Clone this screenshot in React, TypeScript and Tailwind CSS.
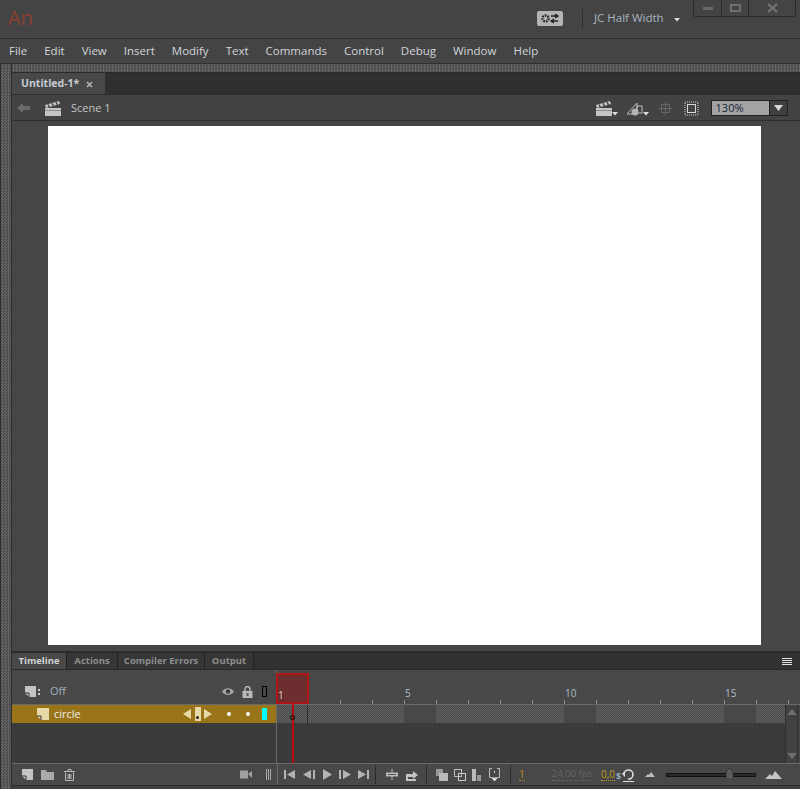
import type { ReactNode } from 'react'

const menus = ['File', 'Edit', 'View', 'Insert', 'Modify', 'Text', 'Commands', 'Control', 'Debug', 'Window', 'Help']
const frames = Array.from({ length: 17 }, (_, i) => i)
const rulerLabels: Record<number, string> = { 4: '5', 9: '10', 14: '15' }

const dots = 'bg-[image:repeating-conic-gradient(#474747_0_25%,#3e3e3e_0_50%)] bg-[size:2px_2px]'
const dotsDark = 'bg-[image:repeating-conic-gradient(#3f3f3f_0_25%,#363636_0_50%)] bg-[size:2px_2px]'
const dotsTab = 'bg-[image:repeating-conic-gradient(#363636_0_25%,#2c2c2c_0_50%)] bg-[size:2px_2px]'
const grip = 'bg-[image:repeating-conic-gradient(#636363_0_25%,#4a4a4a_0_50%)] bg-[size:3px_3px]'
const noise = 'bg-[image:repeating-conic-gradient(#626262_0_25%,#494949_0_50%)] bg-[size:2px_2px]'

function Icon({ w, h, className, children }: { w: number; h: number; className?: string; children: ReactNode }) {
  return (
    <svg width={w} height={h} viewBox={`0 0 ${w} ${h}`} className={`shrink-0 ${className ?? ''}`}>
      {children}
    </svg>
  )
}

function Clapper({ className }: { className?: string }) {
  return (
    <Icon w={16} h={15} className={className}>
      <path d="M0 7h16v8H0z" fill="#c4c4c4" />
      <path d="M0 9h16v1H0z" fill="#8a8a8a" />
      <path d="M0 4l14-4 1 3L1 7z" fill="#c4c4c4" />
      <path d="M3 3.5l1.5 3M7 2.3l1.5 3M11 1l1.5 3" stroke="#444" strokeWidth="1.4" />
    </Icon>
  )
}

function Caret() {
  return (
    <Icon w={6} h={4} className="self-end">
      <path d="M0 0h6L3 3.5z" fill="#ddd" />
    </Icon>
  )
}

function LayerIcon({ size = 12, fill = '#c4c4c4' }: { size?: number; fill?: string }) {
  return (
    <Icon w={size} h={size}>
      <path d={`M0 0h${size}v${size}H4L0 ${size - 4}z`} fill={fill} />
      <path d={`M0 ${size - 4}h4v4`} fill="none" stroke="#333" />
    </Icon>
  )
}

function Tab({ label, active, width }: { label: string; active?: boolean; width: string }) {
  return (
    <div
      className={`${width} flex h-full items-center justify-center border-r border-[#222] text-[9.5px] font-bold ${
        active ? 'bg-[#484848] text-[#d4d4d4]' : 'bg-[#363636] text-[#8d8d8d]'
      }`}
    >
      {label}
    </div>
  )
}

export default function App() {
  return (
    <div className="flex h-[789px] w-[800px] flex-col overflow-hidden bg-[#444444] font-['Open_Sans',sans-serif] text-[#d2d2d2]">
      {/* title bar */}
      <div className="relative flex h-[39px] shrink-0 items-start border-b border-[#303030] pl-[8px]">
        <span className="mt-[3px] w-[30px] text-[20px] leading-[30px] text-[#8d3f30]">An</span>
        <div className="ml-[499px] mt-[11px] flex h-[15px] w-[26px] items-center justify-center rounded-[2px] bg-[#b4b4b4]">
          <Icon w={20} h={11}>
            <circle cx="5.5" cy="5.5" r="3" fill="none" stroke="#222" strokeWidth="2.4" strokeDasharray="1.6 1" />
            <path d="M11 3h6M15 1l3 2-3 2M18 8h-6M14 6l-3 2 3 2" fill="none" stroke="#222" strokeWidth="1.3" />
          </Icon>
        </div>
        <div className="ml-[19px] mt-[9px] h-[20px] w-px bg-[#2f2f2f]" />
        <span className="ml-[11px] mt-[9px] text-[11.5px] leading-[18px] text-[#a9b6c2]">JC Half Width</span>
        <div className="ml-[10px] mt-[18px]">
          <Caret />
        </div>
        <div className="absolute left-[693px] top-0 flex h-[17px] w-[103px] rounded-b-[3px] border border-t-0 border-[#2b2b2b]">
          <div className="flex w-[28px] items-center justify-center border-r border-[#2b2b2b] bg-[#444444]">
            <div className="h-[3px] w-[10px] bg-[#6a6a6a]" />
          </div>
          <div className="flex w-[27px] items-center justify-center border-r border-[#2b2b2b]">
            <div className="h-[8px] w-[11px] border-2 border-[#6e6e6e]" />
          </div>
          <div className="flex flex-1 items-center justify-center">
            <Icon w={11} h={10}>
              <path d="M1 1l9 8M10 1L1 9" stroke="#757575" strokeWidth="2" />
            </Icon>
          </div>
        </div>
      </div>

      {/* menu bar */}
      <div className="flex h-[25px] shrink-0 items-center gap-[17px] border-b border-[#2f2f2f] pl-[9px] text-[11.5px] text-[#d2d6da]">
        {menus.map((m) => (
          <span key={m}>{m}</span>
        ))}
      </div>

      <div className="flex min-h-0 flex-1">
        {/* left gripper rail */}
        <div className={`w-[12px] shrink-0 border-x border-x-[#2f2f2f] ${grip}`} />

        <div className="flex min-w-0 flex-1 flex-col">
          <div className={`h-[9px] shrink-0 border-b border-[#2a2a2a] ${grip}`} />

          {/* document tab */}
          <div className="flex h-[21px] shrink-0 bg-[#2f2f2f]">
            <div className="flex w-[93px] items-center bg-[#484848] pl-[9px] pt-[1px] text-[10.5px] font-bold text-[#c6ccd2]">
              Untitled-1*
              <Icon w={7} h={7} className="ml-[7px]">
                <path d="M1 1l5 5M6 1L1 6" stroke="#b5b5b5" strokeWidth="1.6" />
              </Icon>
            </div>
          </div>

          {/* edit bar */}
          <div className={`flex h-[27px] shrink-0 items-center border-y border-y-[#2c2c2c] pt-[1px] ${dots}`}>
            <Icon w={13} h={10} className="ml-[5px]">
              <path d="M0 5l6-5v3h7v4H6v3z" fill="#6a6a6a" />
            </Icon>
            <Clapper className="ml-[15px]" />
            <span className="ml-[10px] text-[11px] text-[#c4c4c4]">Scene 1</span>
            <div className="ml-[485px] flex items-end">
              <Clapper />
              <Caret />
            </div>
            <div className="ml-[8px] flex items-end">
              <Icon w={17} h={15}>
                <path d="M1 13L11 2v11H1z" fill="none" stroke="#bbb" />
                <rect x="11" y="5" width="5" height="7" fill="none" stroke="#bbb" />
                <circle cx="9" cy="11" r="3.5" fill="#b4b4b4" />
              </Icon>
              <Caret />
            </div>
            <Icon w={13} h={13} className="ml-[10px]">
              <rect x="2.5" y="2.5" width="8" height="8" fill="none" stroke="#666" />
              <path d="M6.5 0v13M0 6.5h13" stroke="#666" />
            </Icon>
            <Icon w={15} h={15} className="ml-[12px]">
              <rect x="1" y="1" width="13" height="13" fill="none" stroke="#888" strokeDasharray="1 1" strokeWidth="2" />
              <rect x="3.5" y="3.5" width="8" height="8" fill="none" stroke="#d8d8d8" />
            </Icon>
            <div className="ml-[12px] flex h-[16px] w-[59px] items-center border border-[#222] bg-[#a4a4a4] pl-[4px] text-[11px] text-[#16233c]">
              130%
            </div>
            <div className="flex h-[16px] w-[18px] items-center justify-center border border-l-0 border-[#222] bg-[#3f3f3f]">
              <Icon w={9} h={6}>
                <path d="M0 0h9L4.5 6z" fill="#d8d8d8" />
              </Icon>
            </div>
          </div>

          {/* stage */}
          <div className="flex min-h-0 flex-1 flex-col bg-[#464646] pb-[6px] pl-[36px] pt-[5px]">
            <div className="w-[713px] flex-1 bg-white" />
          </div>

          {/* timeline panel */}
          <div className="flex h-[135px] shrink-0 flex-col border-t-2 border-[#2a2a2a]">
            <div className={`flex h-[17px] shrink-0 items-stretch border-b border-[#2a2a2a] ${dotsTab}`}>
              <Tab label="Timeline" active width="w-[55px]" />
              <Tab label="Actions" width="w-[51px]" />
              <Tab label="Compiler Errors" width="w-[87px]" />
              <Tab label="Output" width="w-[49px]" />
              <div className="ml-auto mr-[8px] flex flex-col justify-center gap-[1px]">
                <div className="h-px w-[10px] bg-[#e0e0e0]" />
                <div className="h-px w-[10px] bg-[#e0e0e0]" />
                <div className="h-px w-[10px] bg-[#e0e0e0]" />
                <div className="h-px w-[10px] bg-[#e0e0e0]" />
              </div>
            </div>

            <div className="relative flex min-h-0 flex-1 flex-col">
              {/* header row with ruler */}
              <div className="flex h-[35px] shrink-0 border-b border-[#6a6a6a] bg-[#484848]">
                <div className="flex w-[264px] shrink-0 items-center pt-[9px]">
                  <div className="ml-[13px] flex items-center gap-[2px]">
                    <LayerIcon size={11} />
                    <div className="flex flex-col gap-[2px]">
                      <div className="h-[2px] w-[2px] bg-[#ccc]" />
                      <div className="h-[2px] w-[2px] bg-[#ccc]" />
                    </div>
                  </div>
                  <span className="ml-[10px] text-[11px] text-[#9fb0c0]">Off</span>
                  <Icon w={12} h={9} className="ml-[156px]">
                    <path d="M0 4.5C3 0 9 0 12 4.5 9 9 3 9 0 4.5z" fill="#a8a8a8" />
                    <circle cx="6" cy="4.5" r="2.2" fill="#3a3a3a" />
                  </Icon>
                  <Icon w={11} h={12} className="ml-[8px]">
                    <path d="M3 5V3a2.5 2.5 0 015 0v2" fill="none" stroke="#b8b8b8" strokeWidth="1.4" />
                    <rect x="0.5" y="5" width="10" height="7" fill="#b8b8b8" />
                    <rect x="4.5" y="7" width="2" height="3" fill="#555" />
                  </Icon>
                  <div className="ml-[9px] h-[11px] w-[5px] border border-black" />
                </div>
                <div className="flex min-w-0 flex-1 overflow-hidden border-l border-[#6a6a6a]">
                  {frames.map((i) => (
                    <div key={i} className={`flex h-full w-[32px] shrink-0 flex-col justify-end ${i === 0 ? '-ml-px' : ''}`}>
                      <span className="pl-[1px] text-[10px] leading-[14px] text-[#aebccb]">{rulerLabels[i]}</span>
                      <div className={`h-[4px] w-px ${i > 1 ? 'bg-[#8c8c8c]' : ''}`} />
                    </div>
                  ))}
                </div>
              </div>

              {/* layer rows */}
              <div className="flex min-h-0 flex-1">
                <div className="flex w-[264px] shrink-0 flex-col">
                  <div className="flex h-[18px] shrink-0 items-center bg-[#9a7419] text-[11px] text-[#f0f0e8]">
                    <div className="ml-[25px]">
                      <LayerIcon size={12} fill="#e8d9a8" />
                    </div>
                    <span className="ml-[5px]">circle</span>
                    <Icon w={8} h={10} className="ml-[102px]">
                      <path d="M8 0v10L0 5z" fill="#e8d9a8" />
                    </Icon>
                    <div className="ml-[4px] flex h-[14px] w-[6px] items-end justify-center bg-[#e8d9a8] pb-[2px]">
                      <div className="h-[3px] w-[3px] rounded-full bg-[#222]" />
                    </div>
                    <Icon w={8} h={10} className="ml-[3px]">
                      <path d="M0 0v10l8-5z" fill="#e8d9a8" />
                    </Icon>
                    <div className="ml-[15px] h-[4px] w-[4px] rounded-full bg-white" />
                    <div className="ml-[15px] h-[4px] w-[4px] rounded-full bg-white" />
                    <div className="ml-[12px] h-[12px] w-[5px] bg-[#00ffff]" />
                  </div>
                  <div className={`flex-1 ${dotsDark}`} />
                </div>
                <div className="flex min-w-0 flex-1 border-l border-[#6a6a6a]">
                  <div className="flex min-w-0 flex-1 flex-col">
                    <div className="flex h-[18px] shrink-0 overflow-hidden">
                      {frames.map((i) => (
                        <div
                          key={i}
                          className={`flex h-full w-[32px] shrink-0 items-end justify-center ${
                            i % 5 === 4 ? 'bg-[#484848]' : noise
                          } ${i === 0 ? '-ml-px border-r border-[#2f2f2f]' : ''}`}
                        >
                          {i === 0 && <div className="relative z-10 mb-[3px] ml-[2px] h-[5px] w-[5px] rounded-full border border-black" />}
                        </div>
                      ))}
                    </div>
                    <div className={`flex-1 ${dotsDark}`} />
                  </div>
                  {/* frame scrollbar */}
                  <div className="flex w-[13px] shrink-0 flex-col justify-between border-x border-[#2f2f2f] bg-[#414141] py-[4px] pl-[1px]">
                    <Icon w={10} h={6}>
                      <path d="M5 0l5 6H0z" fill="#6e6e6e" />
                    </Icon>
                    <Icon w={10} h={6}>
                      <path d="M0 0h10L5 6z" fill="#6e6e6e" />
                    </Icon>
                  </div>
                  <div className="w-[2px] shrink-0" />
                </div>
              </div>

              {/* current frame marker and playhead */}
              <div className="absolute left-[264px] top-[3px] flex h-[31px] w-[33px] items-end border-2 border-[#b01414] bg-[#6c2e2e] text-[10px] leading-[14px] text-[#e0cfc4]">
                1
              </div>
              <div className="absolute left-[280px] top-[34px] h-[59px] w-[2px] bg-[#bb0a0a]" />

              {/* timeline controls */}
              <div className="flex h-[23px] shrink-0 items-center border-y border-b-[#2a2a2a] border-t-[#6a6a6a] bg-[#484848]">
                <div className="ml-[10px]">
                  <LayerIcon size={11} />
                </div>
                <Icon w={13} h={11} className="ml-[8px]">
                  <path d="M0 1h5l1 2h7v8H0z" fill="#aaa" />
                </Icon>
                <Icon w={11} h={12} className="ml-[10px]">
                  <path d="M0 2.5h11M4 2.5V.5h3v2" fill="none" stroke="#bbb" />
                  <path d="M1.5 3.5v8h8v-8M4 5v5M5.5 5v5M7 5v5" fill="none" stroke="#bbb" />
                </Icon>
                <Icon w={12} h={9} className="ml-[165px]">
                  <rect y="0.5" width="8" height="8" fill="#a0a0a0" />
                  <path d="M8 4l4-3v7z" fill="#a0a0a0" />
                </Icon>
                <div className="ml-[14px] flex gap-[1px]">
                  <div className="h-[11px] w-px bg-[#aaa]" />
                  <div className="h-[11px] w-px bg-[#aaa]" />
                  <div className="h-[11px] w-px bg-[#aaa]" />
                </div>
                <div className="ml-[6px] h-full w-px bg-[#6a6a6a]" />
                <Icon w={11} h={9} className="ml-[6px]">
                  <path d="M0 0h2v9H0zM11 0v9L3 4.5z" fill="#b4b4b4" />
                </Icon>
                <Icon w={12} h={9} className="ml-[8px]">
                  <path d="M8 0v9L0 4.5zM10 0h2v9h-2z" fill="#b4b4b4" />
                </Icon>
                <Icon w={9} h={11} className="ml-[8px]">
                  <path d="M0 0l9 5.5L0 11z" fill="#b4b4b4" />
                </Icon>
                <Icon w={12} h={9} className="ml-[7px]">
                  <path d="M0 0h2v9H0zM4 0l8 4.5L4 9z" fill="#b4b4b4" />
                </Icon>
                <Icon w={11} h={9} className="ml-[7px]">
                  <path d="M0 0l8 4.5L0 9zM9 0h2v9H9z" fill="#b4b4b4" />
                </Icon>
                <div className="ml-[6px] h-[19px] w-px bg-[#2a2a2a]" />
                <Icon w={12} h={11} className="ml-[10px]">
                  <path d="M6 0v11" stroke="#bbb" />
                  <rect y="3.5" width="12" height="4" fill="#bbb" />
                  <path d="M2 5.5h8" stroke="#555" />
                </Icon>
                <Icon w={14} h={12} className="ml-[7px]">
                  <path d="M1 5h7V2l5 4-5 4V8H3v2h8v2H1z" fill="#c4c4c4" />
                </Icon>
                <div className="ml-[7px] h-[19px] w-px bg-[#2a2a2a]" />
                <Icon w={12} h={12} className="ml-[9px]">
                  <rect y="0" width="7" height="7" fill="#999" />
                  <rect x="3" y="4" width="9" height="8" fill="#bbb" />
                </Icon>
                <Icon w={12} h={12} className="ml-[6px]">
                  <rect x="0.5" y="0.5" width="7" height="7" fill="none" stroke="#bbb" />
                  <rect x="4.5" y="4.5" width="7" height="7" fill="none" stroke="#ccc" />
                </Icon>
                <Icon w={9} h={12} className="ml-[6px]">
                  <rect y="0" width="4" height="12" fill="#bbb" />
                  <rect x="5" y="6" width="4" height="6" fill="#999" />
                </Icon>
                <Icon w={11} h={13} className="ml-[8px]">
                  <path d="M3 .5H.5v9H3M8 .5h2.5v9H8" fill="none" stroke="#bbb" />
                  <path d="M5.5 3v2M3 10h5l-2.5 3z" stroke="#ddd" fill="#ddd" />
                </Icon>
                <div className="ml-[10px] h-[19px] w-px bg-[#2a2a2a]" />
                <span className="ml-[8px] border-b border-dotted border-[#b08a20] text-[10px] leading-[12px] text-[#c08a20]">1</span>
                <span className="ml-[27px] border-b border-dotted border-[#6a6a6a] text-[9.5px] leading-[12px] text-[#666666]">24,00 fps</span>
                <span className="ml-[9px] border-b border-dotted border-[#c09a20] text-[10px] leading-[12px] text-[#c09a20]">0,0</span>
                <span className="ml-[1px] text-[10px] font-bold leading-[12px] text-[#9fb0c0]">s</span>
                <Icon w={13} h={14} className="ml-[1px]">
                  <path d="M2 6a4.5 4.5 0 114 5" fill="none" stroke="#ddd" strokeWidth="1.6" />
                  <path d="M0 6l3-3v6z" fill="#ddd" />
                  <path d="M1 13.5h11" stroke="#ddd" />
                </Icon>
                <Icon w={10} h={5} className="ml-[10px]">
                  <path d="M0 5l3-3 1 1 2-3 4 5z" fill="#bdbdbd" />
                </Icon>
                <div className="relative ml-[11px] h-[4px] w-[90px] border border-[#111] bg-[#2a2a2a]">
                  <Icon w={7} h={11} className="absolute left-[59px] top-[-6px]">
                    <path d="M3.5 0L7 4v7H0V4z" fill="#5d5d5d" stroke="#333" />
                  </Icon>
                </div>
                <Icon w={17} h={8} className="ml-[9px]">
                  <path d="M0 8l5-5 2 2 3-5 7 8z" fill="#c4c4c4" />
                </Icon>
              </div>
            </div>
          </div>
          <div className="h-[3px] shrink-0 bg-[#404040]" />
        </div>
      </div>
    </div>
  )
}
